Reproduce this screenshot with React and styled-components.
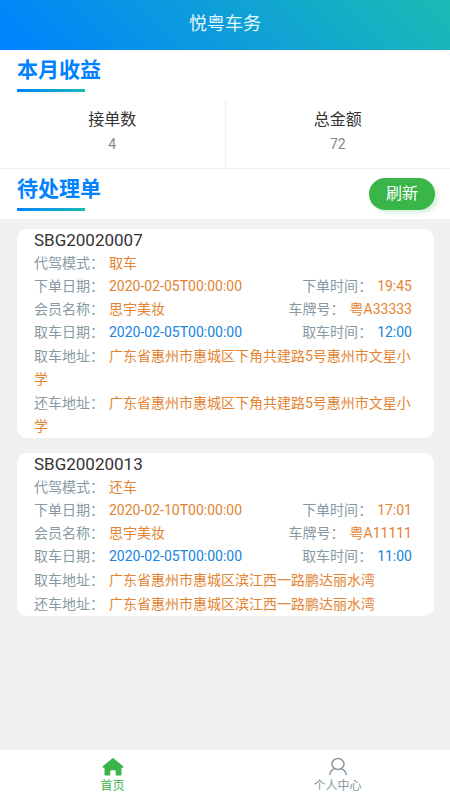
import React from 'react';
import styled, { createGlobalStyle } from 'styled-components';

const ORDERS = [
  {
    id: 'SBG20020007',
    mode: '取车',
    orderDate: '2020-02-05T00:00:00',
    orderTime: '19:45',
    member: '思宇美妆',
    plate: '粤A33333',
    pickupDate: '2020-02-05T00:00:00',
    pickupTime: '12:00',
    pickupAddress: '广东省惠州市惠城区下角共建路5号惠州市文星小学',
    returnAddress: '广东省惠州市惠城区下角共建路5号惠州市文星小学',
  },
  {
    id: 'SBG20020013',
    mode: '还车',
    orderDate: '2020-02-10T00:00:00',
    orderTime: '17:01',
    member: '思宇美妆',
    plate: '粤A11111',
    pickupDate: '2020-02-05T00:00:00',
    pickupTime: '11:00',
    pickupAddress: '广东省惠州市惠城区滨江西一路鹏达丽水湾',
    returnAddress: '广东省惠州市惠城区滨江西一路鹏达丽水湾',
  },
];

function Field({ label, value, $color }) {
  return (
    <span>
      {label}：<Value $color={$color}>{value}</Value>
    </span>
  );
}

function Order({ order }) {
  return (
    <Card>
      <OrderId>{order.id}</OrderId>
      <Row>
        <Field label="代驾模式" value={order.mode} />
      </Row>
      <Row>
        <Field label="下单日期" value={order.orderDate} />
        <Field label="下单时间" value={order.orderTime} />
      </Row>
      <Row>
        <Field label="会员名称" value={order.member} />
        <Field label="车牌号" value={order.plate} />
      </Row>
      <Row>
        <Field label="取车日期" value={order.pickupDate} $color="#1485e0" />
        <Field label="取车时间" value={order.pickupTime} $color="#1485e0" />
      </Row>
      <AddressRow>
        <Field label="取车地址" value={order.pickupAddress} />
      </AddressRow>
      <AddressRow>
        <Field label="还车地址" value={order.returnAddress} />
      </AddressRow>
    </Card>
  );
}

function App() {
  return (
    <Page>
      <GlobalStyle />
      <Header>悦粤车务</Header>
      <SectionBar>
        <SectionTitle>本月收益</SectionTitle>
      </SectionBar>
      <Stats>
        <Stat>
          <StatName>接单数</StatName>
          <StatValue>4</StatValue>
        </Stat>
        <Stat>
          <StatName>总金额</StatName>
          <StatValue>72</StatValue>
        </Stat>
      </Stats>
      <SectionBar>
        <SectionTitle>待处理单</SectionTitle>
        <RefreshButton type="button">刷新</RefreshButton>
      </SectionBar>
      <Orders>
        {ORDERS.map((order) => (
          <Order key={order.id} order={order} />
        ))}
      </Orders>
      <TabBar>
        <Tab href="#home" $active>
          <svg width="22" height="20" viewBox="0 0 22 20" fill="currentColor" aria-hidden="true">
            <path d="M10.2 1.4a1.2 1.2 0 0 1 1.6 0l9.400 7.900c.7.6.4 1.500-.5 1.500H19.500v6.400c0 .8-.5 1.300-1.300 1.300h-4.400v-3.600c0-1-.6-1.600-1.500-1.600H9.700c-.9 0-1.500.6-1.500 1.600v3.600H3.800c-.8 0-1.300-.5-1.300-1.300v-6.400H1.300c-.9 0-1.200-.9-.5-1.500z" />
          </svg>
          首页
        </Tab>
        <Tab href="#me">
          <svg width="22" height="20" viewBox="0 0 22 20" fill="none" stroke="currentColor" strokeWidth="1.5" strokeLinecap="round" aria-hidden="true">
            <ellipse cx="11" cy="7" rx="6" ry="5.5" />
            <path d="M7.500 11.600C5 12.700 3.200 14.800 2.800 17.500M14.500 11.600c2.500 1.100 4.300 3.200 4.700 5.900" />
          </svg>
          个人中心
        </Tab>
      </TabBar>
    </Page>
  );
}

const GlobalStyle = createGlobalStyle`
  * {
    box-sizing: border-box;
  }

  body {
    margin: 0;
    background-color: #f0f0f0;
    color: #333333;
    font-family: Roboto, "Noto Sans CJK SC", sans-serif;
    font-size: 14px;
  }
`;

const Page = styled.div`
  min-height: 100vh;
  display: flex;
  flex-direction: column;
`;

const Header = styled.header`
  height: 50px;
  line-height: 48px;
  text-align: center;
  font-size: 18px;
  color: #e4f4fc;
  background-image: linear-gradient(45deg, #0081ff, #1cbbb4);
`;

const SectionBar = styled.div`
  height: 50px;
  padding: 0 15px 0 17px;
  display: flex;
  justify-content: space-between;
  align-items: center;
  background-color: white;
`;

const SectionTitle = styled.h2`
  margin: 0;
  padding-bottom: 3px;
  color: #0081ff;
  font-size: 21px;
  line-height: 30px;
  font-weight: 700;

  &::after {
    content: "";
    display: block;
    width: 68px;
    height: 3px;
    margin-top: 4px;
    background-image: linear-gradient(45deg, #0081ff, #1cbbb4);
  }
`;

const RefreshButton = styled.button`
  height: 32px;
  padding: 0 17px;
  border: none;
  border-radius: 16px;
  background-color: #39b54a;
  box-shadow: 3px 3px 4px rgba(57, 181, 74, 0.2);
  color: white;
  font-family: inherit;
  font-size: 16px;
  line-height: 32px;
`;

const Stats = styled.div`
  display: flex;
  background-color: white;
  border-bottom: 1px solid #eeeeee;
`;

const Stat = styled.div`
  flex: 1;
  padding: 8px 0 12px;
  text-align: center;

  & + & {
    border-left: 1px solid #eeeeee;
  }
`;

const StatName = styled.div`
  font-size: 16px;
  line-height: 24px;
`;

const StatValue = styled.div`
  color: #888888;
  line-height: 24px;
`;

const Orders = styled.main`
  flex: 1;
  padding: 10px 16px 15px 17px;
  display: flex;
  flex-direction: column;
  gap: 15px;
`;

const Card = styled.article`
  padding: 0 17px;
  border-radius: 10px;
  background-color: white;
`;

const OrderId = styled.h3`
  margin: 0 0 1px;
  font-weight: 400;
  font-size: 17px;
  line-height: 22px;
`;

const Row = styled.div`
  display: flex;
  justify-content: space-between;
  color: #8799a3;
  line-height: 23px;
`;

const AddressRow = styled(Row)`
  margin-top: 1px;
`;

const Value = styled.span`
  margin: 0 5px;
  color: ${(props) => props.$color || '#e38433'};
`;

const TabBar = styled.nav`
  position: sticky;
  bottom: 0;
  height: 50px;
  display: flex;
  background-color: white;
`;

const Tab = styled.a`
  flex: 1;
  padding-top: 7px;
  display: flex;
  flex-direction: column;
  align-items: center;
  font-size: 12px;
  line-height: 18px;
  text-decoration: none;
  color: ${(props) => (props.$active ? '#39b54a' : '#8799a3')};
`;

export default App;
